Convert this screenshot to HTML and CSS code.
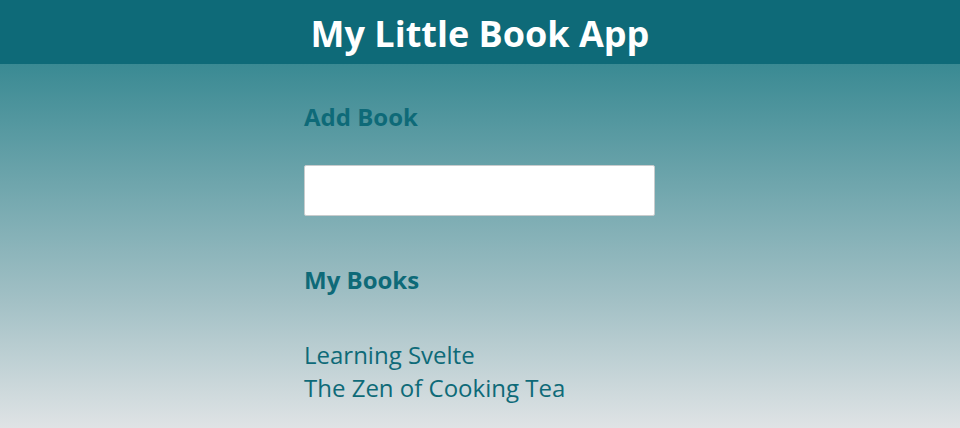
FILE: index.html
```html
<!DOCTYPE html>
<html>
<head>
<meta charset="utf-8">
<link rel="stylesheet" href="styles.css">
</head>
<body>
<header class="topbar"><h1 class="title">My Little Book App</h1></header>
<main class="content">
  <h2 class="section-title">Add Book</h2>
  <input class="book-input" type="text">
  <h2 class="section-title books-title">My Books</h2>
  <ul class="book-list">
    <li>Learning Svelte</li>
    <li>The Zen of Cooking Tea</li>
  </ul>
</main>
</body>
</html>
```
FILE: styles.css
```css
html, body { margin: 0; padding: 0; }
body {
  min-height: 428px;
  font-family: "Open Sans", "Noto Sans", sans-serif;
  background: linear-gradient(to bottom, #0e6a78 0px, #3a8a93 64px, #a2c0c5 300px, #dfe3e5 428px);
  color: #0e6a78;
}
.topbar {
  height: 64px;
  box-sizing: border-box;
  padding-top: 2px;
  background: #0e6a78;
  display: flex;
  align-items: center;
  justify-content: center;
}
.title {
  margin: 0;
  color: #fff;
  font-size: 36px;
  font-weight: 700;
}
.content {
  width: 352px;
  margin: 0 auto;
  padding-top: 36px;
  display: flex;
  flex-direction: column;
  align-items: flex-start;
}
.section-title {
  margin: 0;
  font-size: 24px;
  line-height: 34px;
  font-weight: 700;
}
.book-input {
  margin-top: 31px;
  width: 351px;
  height: 51px;
  box-sizing: border-box;
  border: 1px solid #c8cccd;
  border-radius: 2px;
  background: #fff;
}
.books-title { margin-top: 47px; }
.book-list {
  list-style: none;
  margin: 41px 0 0;
  padding: 0;
  font-size: 24px;
  line-height: 33px;
}
```
